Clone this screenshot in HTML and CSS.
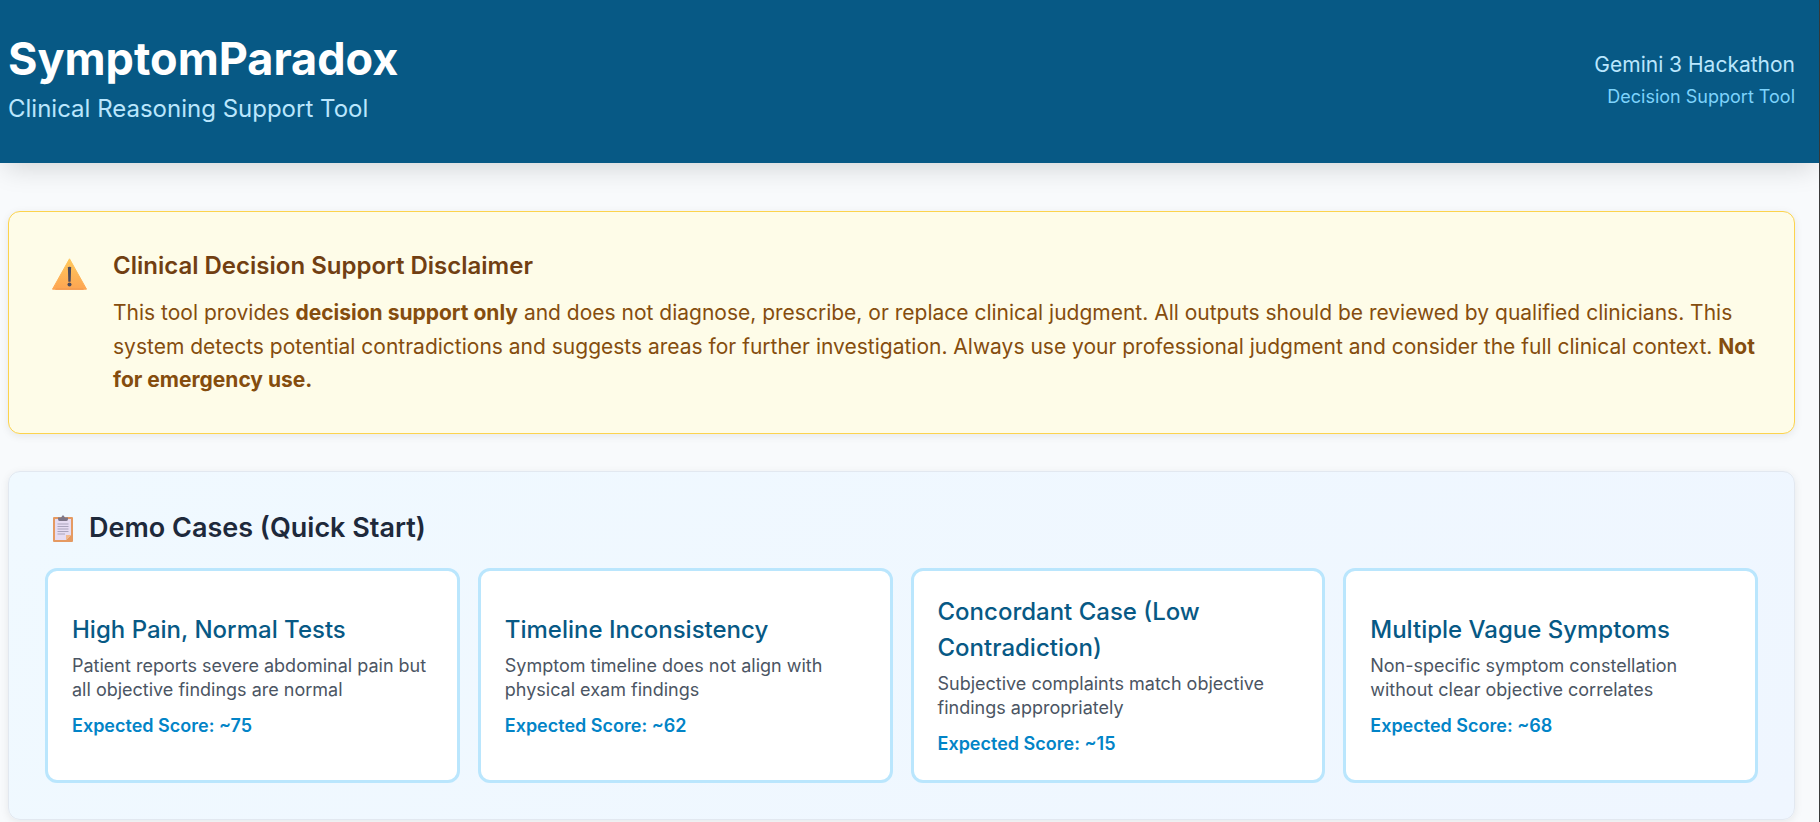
FILE: index.html
```html
<!DOCTYPE html>
<html lang="en">
<head>
<meta charset="utf-8">
<title>SymptomParadox</title>
<link rel="stylesheet" href="styles.css">
</head>
<body>
<div class="page">
<header class="topbar">
  <div class="brand">
    <h1>SymptomParadox</h1>
    <p>Clinical Reasoning Support Tool</p>
  </div>
  <div class="event">
    <div class="event-name">Gemini 3 Hackathon</div>
    <div class="event-tag">Decision Support Tool</div>
  </div>
</header>
<main class="content">
  <section class="disclaimer">
    <svg class="warn-icon" viewBox="0 0 35 32" aria-hidden="true">
      <defs>
        <linearGradient id="warnfill" x1="0" y1="0" x2="0" y2="1">
          <stop offset="0" stop-color="#ffc85c"/>
          <stop offset="1" stop-color="#fda552"/>
        </linearGradient>
      </defs>
      <path d="M17.500 0.800 L34.500 31.200 H0.500 Z" fill="url(#warnfill)" stroke="url(#warnfill)" stroke-width="1" stroke-linejoin="round"/>
      <path d="M31 30.600 H4 L3 31.700 H32 Z" fill="#f39a4e"/>
      <path d="M15.900 9.500 Q15.900 8.700 17.500 8.700 Q19.100 8.700 19.100 9.500 L18.700 23.700 H16.300 Z" fill="#4b4a5c"/>
      <circle cx="17.500" cy="26.400" r="2" fill="#4b4a5c"/>
    </svg>
    <div class="disclaimer-body">
      <h2>Clinical Decision Support Disclaimer</h2>
      <p>This tool provides <strong>decision support only</strong> and does not diagnose, prescribe, or replace clinical judgment. All outputs should be reviewed by qualified clinicians. This system detects potential contradictions and suggests areas for further investigation. Always use your professional judgment and consider the full clinical context. <strong>Not for emergency use.</strong></p>
    </div>
  </section>
  <section class="demo">
    <h2 class="demo-title">
      <svg class="clip-icon" viewBox="0 0 20 27" aria-hidden="true">
        <rect x="0" y="2" width="20" height="25" rx="1" fill="#e59a62"/>
        <path d="M2 4 H18 V20 L13 25 H2 Z" fill="#e6dcf2"/>
        <path d="M13 25 L18 20 H13 Z" fill="#f3b98c"/>
        <path d="M5 4 V2.500 H8 L10 0 L12 2.500 H15 V4 Q15 6 13.500 6 H6.500 Q5 6 5 4 Z" fill="#7d7688"/>
        <path d="M4.500 9 H15.500 M4.500 11.500 H15.500 M4.500 14 H15.500 M4.500 16.500 H15.500 M4.500 19 H12" stroke="#a9a3bc" stroke-width="1.200"/>
      </svg>
      <span>Demo Cases (Quick Start)</span>
    </h2>
    <div class="case-grid">
      <article class="case">
        <h3>High Pain, Normal Tests</h3>
        <p>Patient reports severe abdominal pain but all objective findings are normal</p>
        <div class="score">Expected Score: ~75</div>
      </article>
      <article class="case">
        <h3>Timeline Inconsistency</h3>
        <p>Symptom timeline does not align with physical exam findings</p>
        <div class="score">Expected Score: ~62</div>
      </article>
      <article class="case">
        <h3>Concordant Case (Low Contradiction)</h3>
        <p>Subjective complaints match objective findings appropriately</p>
        <div class="score">Expected Score: ~15</div>
      </article>
      <article class="case">
        <h3>Multiple Vague Symptoms</h3>
        <p>Non-specific symptom constellation without clear objective correlates</p>
        <div class="score">Expected Score: ~68</div>
      </article>
    </div>
  </section>
</main>
</div>
</body>
</html>
```
FILE: styles.css
```css
* { box-sizing: border-box; }
html, body { margin: 0; height: 822px; overflow: hidden; }
body {
  background: #f8fafc;
  font-family: Inter, "Liberation Sans", sans-serif;
  color: #1e293b;
}
.page {
  height: 822px;
  border-right: 1px solid #3a3a3a;
}
.topbar {
  height: 163px;
  padding: 0 24px 0 8px;
  background: #075985;
  display: flex;
  justify-content: space-between;
  align-items: center;
  box-shadow: 0 10px 25px -5px rgba(0, 0, 0, .15);
}
.brand { margin-bottom: 11px; }
.brand h1 {
  margin: 0;
  font-size: 45px;
  font-weight: 700;
  line-height: 65px;
  color: #fff;
}
.brand p {
  margin: 0;
  font-size: 24px;
  line-height: 1.5;
  color: #bae6fd;
}
.event { text-align: right; margin-bottom: 3px; }
.event-name { font-size: 21px; line-height: 1.6; color: #bae6fd; }
.event-tag { font-size: 18px; line-height: 1.6; margin-top: 2px; color: #7dd3fc; }
.content {
  padding: 48px 24px 0 8px;
}
.disclaimer {
  padding: 36px;
  display: flex;
  gap: 18px;
  background: #fefce8;
  border: 1px solid #fcd34d;
  border-radius: 12px;
  box-shadow: 0 2px 8px rgba(0, 0, 0, .08);
  margin-bottom: 37px;
}
.warn-icon { width: 35px; height: 32px; flex: none; margin: 10px 8px 0 7px; }
.disclaimer-body h2 {
  margin: 0 0 12px;
  font-size: 24px;
  font-weight: 600;
  line-height: 1.5;
  color: #713f12;
}
.disclaimer-body p {
  margin: 0;
  font-size: 21px;
  line-height: 1.6;
  color: #854d0e;
}
.disclaimer-body strong { font-weight: 700; }
.demo {
  padding: 36px;
  height: 349px;
  background: linear-gradient(135deg, #f0f9ff, #eff6ff);
  border: 1px solid #e2e8f0;
  border-radius: 12px;
  box-shadow: 0 2px 8px rgba(0, 0, 0, .08);
}
.demo-title {
  margin: 0 0 19.500px;
  display: flex;
  align-items: center;
  gap: 16px;
  padding-left: 8px;
  font-size: 27px;
  font-weight: 600;
  line-height: 1.5;
}
.clip-icon { width: 20px; height: 27px; flex: none; }
.case-grid {
  display: grid;
  grid-template-columns: repeat(4, 1fr);
  gap: 18px;
}
.case {
  height: 215px;
  padding: 24px;
  display: flex;
  flex-direction: column;
  justify-content: center;
  background: #fff;
  border: 3px solid #bae6fd;
  border-radius: 12px;
}
.case h3 {
  margin: 0 0 6px;
  font-size: 24px;
  font-weight: 500;
  line-height: 1.5;
  color: #075985;
}
.case p {
  margin: 0 0 12px;
  font-size: 18px;
  line-height: 24px;
  color: #4b5563;
}
.score {
  font-size: 18px;
  font-weight: 600;
  line-height: 24px;
  color: #0284c7;
}
```
